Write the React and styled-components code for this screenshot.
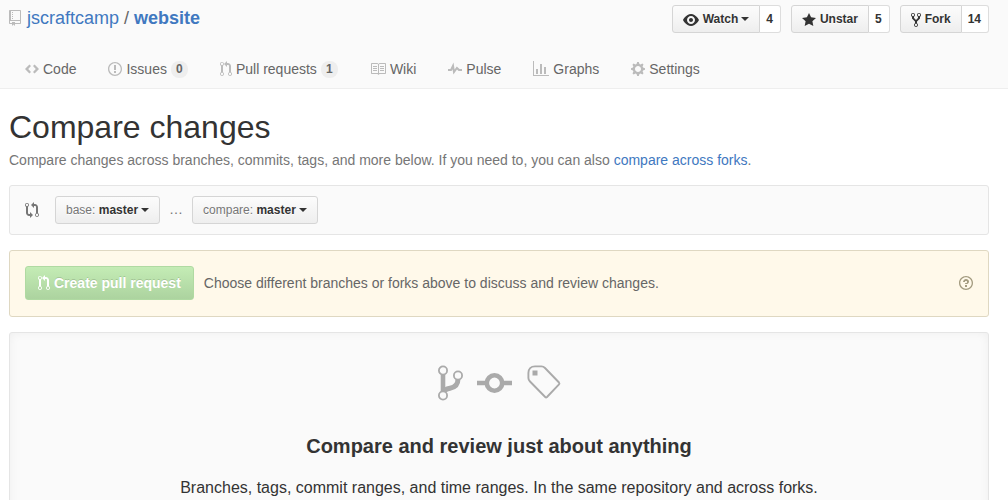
import React from "react";
import styled, { createGlobalStyle, css } from "styled-components";

const GlobalStyle = createGlobalStyle`
  * { box-sizing: border-box; }
  html { scrollbar-width: none; }
  body {
    margin: 0;
    background: #fff;
    color: #333;
    font: 14px/20px "Liberation Sans", Arial, sans-serif;
  }
  a { color: #4078c0; text-decoration: none; }
  button { font-family: inherit; cursor: pointer; }
`;

const ring = "M7 2.3c3.14 0 5.7 2.56 5.7 5.7s-2.56 5.7-5.7 5.7A5.71 5.71 0 0 1 1.3 8c0-3.14 2.56-5.7 5.7-5.7zM7 1C3.14 1 0 4.14 0 8s3.14 7 7 7 7-3.14 7-7-3.14-7-7-7z";

const ICONS = {
  repo: [12, "M4 9H3V8h1v1zm0-3H3v1h1V6zm0-2H3v1h1V4zm0-2H3v1h1V2zm8-1v12c0 .55-.45 1-1 1H6v2l-1.5-1.5L3 16v-2H1c-.55 0-1-.45-1-1V1c0-.55.45-1 1-1h10c.55 0 1 .45 1 1zm-1 10H1v2h2v-1h3v1h5v-2zm0-10H2v9h9V1z"],
  code: [14, "M4.4 3.5L0 8l4.4 4.5L6 10.900 3.200 8 6 5.100zM9.600 3.500L8 5.100 10.800 8 8 10.900l1.600 1.600L14 8z"],
  issue: [14, ring + "M8 4H6v5h2V4zm0 6H6v2h2v-2z"],
  question: [14, ring + "M6 10h2v2H6v-2zm4-3.5C10 8.64 8 9 8 9H6c0-.55.45-1 1-1h.5c.28 0 .5-.22.5-.5v-1c0-.28-.22-.5-.5-.5h-1c-.28 0-.5.22-.5.5V7H4c0-1.5 1.5-3 3-3s3 1 3 2.5z"],
  pull: [12, "M11 11.28V5c-.03-.78-.34-1.47-.94-2.06C9.46 2.35 8.78 2.03 8 2H7V0L4 3l3 3V4h1c.27.02.48.11.69.31.21.2.3.42.31.69v6.28A1.993 1.993 0 0 0 10 15a1.993 1.993 0 0 0 1-3.72zm-1 2.92c-.66 0-1.2-.55-1.2-1.2 0-.65.55-1.2 1.2-1.2.65 0 1.2.55 1.2 1.2 0 .65-.55 1.2-1.2 1.2zM4 3c0-1.11-.89-2-2-2a1.993 1.993 0 0 0-1 3.72v6.56A1.993 1.993 0 0 0 2 15a1.993 1.993 0 0 0 1-3.72V4.72c.59-.34 1-.98 1-1.72zm-.8 10c0 .66-.55 1.2-1.2 1.2-.65 0-1.2-.55-1.2-1.2 0-.65.55-1.2 1.2-1.2.65 0 1.2.55 1.2 1.2zM2 4.2C1.34 4.2.8 3.65.8 3c0-.65.55-1.2 1.2-1.2.65 0 1.2.55 1.2 1.2 0 .65-.55 1.2-1.2 1.2z"],
  book: [16, "M3 5h4v1H3V5zm0 3h4V7H3v1zm0 2h4V9H3v1zm11-5h-4v1h4V5zm0 2h-4v1h4V7zm0 2h-4v1h4V9zm2-6v9c0 .55-.45 1-1 1H9.5l-1 1-1-1H2c-.55 0-1-.45-1-1V3c0-.55.45-1 1-1h5.5l1 1 1-1H15c.55 0 1 .45 1 1zm-8 .5L7.5 3H2v9h6V3.5zm7-.5H9.5l-.5.5V12h6V3z"],
  pulse: [14, "M11.5 8L8.8 5.4 6.6 8.5 5.5 1.6 2.38 8H0v2h3.6l.9-1.8.9 5.4L9 8.5l1.6 1.5H14V8z"],
  graph: [16, "M16 14v1H0V0h1v14h15zM5 13H3V8h2v5zm4 0H7V3h2v10zm4 0h-2V6h2v7z"],
  gear: [14, "M14 8.77v-1.6l-1.94-.64-.45-1.09.88-1.84-1.13-1.13-1.81.91-1.09-.45-.69-1.92h-1.6l-.63 1.94-1.11.45-1.84-.88-1.13 1.13.91 1.81-.45 1.09L0 7.23v1.59l1.94.64.45 1.09-.88 1.84 1.13 1.13 1.81-.91 1.09.45.69 1.92h1.59l.63-1.94 1.11-.45 1.84.88 1.13-1.13-.92-1.81.47-1.09L14 8.75v.02zM7 11c-1.66 0-3-1.34-3-3s1.34-3 3-3 3 1.34 3 3-1.34 3-3 3z"],
  eye: [16, "M8.06 2C3 2 0 8 0 8s3 6 8.06 6C13 14 16 8 16 8s-3-6-7.94-6zM8 12c-2.2 0-4-1.78-4-4 0-2.2 1.8-4 4-4 2.22 0 4 1.8 4 4 0 2.22-1.78 4-4 4zm2-4c0 1.11-.89 2-2 2-1.11 0-2-.89-2-2 0-1.11.89-2 2-2 1.11 0 2 .89 2 2z"],
  star: [14, "M14 6l-4.9-.64L7 1 4.9 5.36 0 6l3.6 3.26L2.67 14 7 11.67 11.33 14l-.93-4.74z"],
  fork: [10, "M8 1a1.993 1.993 0 0 0-1 3.72V6L5 8 3 6V4.72A1.993 1.993 0 0 0 2 1a1.993 1.993 0 0 0-1 3.72V6.5l3 3v1.78A1.993 1.993 0 0 0 5 15a1.993 1.993 0 0 0 1-3.72V9.5l3-3V4.72A1.993 1.993 0 0 0 8 1zM2 4.2C1.34 4.2.8 3.65.8 3c0-.65.55-1.2 1.2-1.2.65 0 1.2.55 1.2 1.2 0 .65-.55 1.2-1.2 1.2zm3 10c-.66 0-1.2-.55-1.2-1.2 0-.65.55-1.2 1.2-1.2.65 0 1.2.55 1.2 1.2 0 .65-.55 1.2-1.2 1.2zm3-10c-.66 0-1.2-.55-1.2-1.2 0-.65.55-1.2 1.2-1.2.65 0 1.2.55 1.2 1.2 0 .65-.55 1.2-1.2 1.2z"],
  compare: [14, "M5 12H4c-.27-.02-.48-.11-.69-.31-.21-.2-.3-.42-.31-.69V4.72A1.993 1.993 0 0 0 2 1a1.993 1.993 0 0 0-1 3.72V11c.03.78.34 1.47.94 2.06.6.59 1.28.91 2.06.94h1v2l3-3-3-3v2zM2 1.8c.66 0 1.2.55 1.2 1.2 0 .65-.55 1.2-1.2 1.2C1.35 4.2.8 3.65.8 3c0-.65.55-1.2 1.2-1.2zm11 9.48V5c-.03-.78-.34-1.47-.94-2.06-.6-.59-1.28-.91-2.06-.94H9V0L6 3l3 3V4h1c.27.02.48.11.69.31.21.2.3.42.31.69v6.28A1.993 1.993 0 0 0 12 15a1.993 1.993 0 0 0 1-3.72zm-1 2.92c-.66 0-1.2-.55-1.2-1.2 0-.65.55-1.2 1.2-1.2.65 0 1.2.55 1.2 1.2 0 .65-.55 1.2-1.2 1.2z"],
};

const Svg = styled.svg`
  display: block;
  flex: none;
  fill: currentColor;
`;

function Icon({ name }) {
  const [width, d] = ICONS[name];
  return (
    <Svg width={width} height="16" viewBox={`0 0 ${width} 16`} aria-hidden="true">
      <path d={d} />
    </Svg>
  );
}

const container = css`
  max-width: 1008px;
  margin: 0 auto;
  padding: 0 19px 0 9px;
`;

const Header = styled.header`
  background: #fafafa;
  border-bottom: 1px solid #eee;
`;

const HeaderInner = styled.div`
  ${container}
  padding-top: 5px;
`;

const TitleRow = styled.div`
  display: flex;
  justify-content: space-between;
  align-items: flex-start;
`;

const RepoTitle = styled.h1`
  display: flex;
  align-items: center;
  gap: 6px;
  margin: 0;
  font-size: 18px;
  line-height: 26px;
  font-weight: 400;
  color: #666;
  svg { color: #bbb; }
`;

const Actions = styled.ul`
  display: flex;
  gap: 10px;
  margin: 0;
  padding: 0;
  list-style: none;
`;

const ActionItem = styled.li`
  display: flex;
`;

const Button = styled.button`
  display: flex;
  align-items: center;
  gap: 3px;
  height: 28px;
  padding: 0 10px;
  border: 1px solid #d5d5d5;
  border-radius: ${(p) => (p.$joined ? "3px 0 0 3px" : "3px")};
  background: linear-gradient(#fcfcfc, #eee);
  color: #333;
  font-size: 12px;
  font-weight: 700;
  line-height: 20px;
  text-shadow: 0 1px 0 rgba(255, 255, 255, 0.9);
  svg { margin: 2px 1px 0 0; }
`;

const Count = styled.a`
  height: 28px;
  padding: 0 7px 0 6px;
  border: 1px solid #ddd;
  border-left: 0;
  border-radius: 0 3px 3px 0;
  background: #fff;
  color: #333;
  font-size: 12px;
  font-weight: 700;
  line-height: 26px;
`;

const Caret = styled.span`
  border: 4px solid transparent;
  border-top-color: currentColor;
  border-bottom: 0;
`;

const Muted = styled.span`
  color: #767676;
  font-weight: 400;
`;

const Nav = styled.nav`
  display: flex;
  margin-top: 17px;
`;

const Tab = styled.a`
  display: flex;
  align-items: center;
  gap: 4px;
  height: 38px;
  padding: 0 16px;
  color: #666;
  svg { color: #bbb; }
`;

const Counter = styled.span`
  min-width: 17px;
  padding: 0 4px;
  border-radius: 8px;
  background: #eee;
  font-size: 12px;
  font-weight: 700;
  line-height: 17px;
  text-align: center;
`;

const Main = styled.main`
  ${container}
  padding-top: 19px;
`;

const PageTitle = styled.h2`
  margin: 0;
  font-size: 32px;
  line-height: 38px;
  font-weight: 400;
`;

const Lead = styled.p`
  margin: 4px 0 15px;
  color: #767676;
`;

const RangeBar = styled.section`
  display: flex;
  align-items: center;
  margin-bottom: 15px;
  padding: 10px 15px;
  border: 1px solid #e5e5e5;
  border-radius: 3px;
  background: #fafafa;
  color: #767676;
`;

const RangeIcon = styled.span`
  margin-right: 16px;
`;

const Dots = styled.span`
  width: 32px;
  padding-bottom: 2px;
  text-align: center;
`;

const Notice = styled.section`
  display: flex;
  align-items: center;
  gap: 10px;
  margin-bottom: 15px;
  padding: 15px 15px 16px;
  border: 1px solid #dfd8c2;
  border-radius: 3px;
  background: #fff9ea;
`;

const NoticeText = styled.p`
  flex: 1;
  margin: 0;
  color: #666;
`;

const PrimaryButton = styled.button`
  display: flex;
  align-items: center;
  gap: 4px;
  height: 34px;
  padding: 0 12px;
  border: 1px solid #b0daa2;
  border-radius: 3px;
  background: linear-gradient(#c4ecb5, #acd39f);
  color: #fff;
  font-size: 14px;
  font-weight: 700;
  line-height: 20px;
  text-shadow: 0 -1px 0 rgba(0, 0, 0, 0.15);
`;

const HelpLink = styled.a`
  color: #a39b7f;
`;

const Blank = styled.section`
  padding: 32px 30px;
  border: 1px solid #e5e5e5;
  border-radius: 3px;
  background: #fafafa;
  box-shadow: inset 0 0 10px rgba(0, 0, 0, 0.05);
  text-align: center;
`;

const BlankIcons = styled.div`
  display: flex;
  justify-content: center;
  gap: 14px;
  color: #aaa;
`;

const BlankTitle = styled.h3`
  margin: 32px 0 17px;
  font-size: 20px;
  line-height: 26px;
`;

const BlankText = styled.p`
  margin: 0;
  font-size: 16px;
  line-height: 24px;
`;

const LineSvg = styled.svg`
  display: block;
  overflow: visible;
  fill: none;
  stroke: currentColor;
`;

const actions = [
  { icon: "eye", label: "Watch", count: 4, menu: true },
  { icon: "star", label: "Unstar", count: 5 },
  { icon: "fork", label: "Fork", count: 14 },
];

const tabs = [
  { icon: "code", label: "Code" },
  { icon: "issue", label: "Issues", count: 0 },
  { icon: "pull", label: "Pull requests", count: 1 },
  { icon: "book", label: "Wiki" },
  { icon: "pulse", label: "Pulse" },
  { icon: "graph", label: "Graphs" },
  { icon: "gear", label: "Settings" },
];

function BranchButton({ label, branch }) {
  return (
    <Button type="button" aria-haspopup="menu">
      <span><Muted>{label}:</Muted> {branch}</span>
      <Caret />
    </Button>
  );
}

export default function App() {
  return (
    <>
      <GlobalStyle />
      <Header>
        <HeaderInner>
          <TitleRow>
            <RepoTitle>
              <Icon name="repo" />
              <span>
                <a href="#owner">jscraftcamp</a> / <a href="#repo"><strong>website</strong></a>
              </span>
            </RepoTitle>
            <Actions>
              {actions.map((a) => (
                <ActionItem key={a.label}>
                  <Button type="button" $joined aria-haspopup={a.menu ? "menu" : undefined}>
                    <Icon name={a.icon} />
                    {a.label}
                    {a.menu && <Caret />}
                  </Button>
                  <Count href={`#${a.icon}`}>{a.count}</Count>
                </ActionItem>
              ))}
            </Actions>
          </TitleRow>
          <Nav aria-label="Repository">
            {tabs.map((t) => (
              <Tab key={t.label} href={`#${t.icon}`}>
                <Icon name={t.icon} />
                {t.label}
                {t.count !== undefined && <Counter>{t.count}</Counter>}
              </Tab>
            ))}
          </Nav>
        </HeaderInner>
      </Header>
      <Main>
        <PageTitle>Compare changes</PageTitle>
        <Lead>
          Compare changes across branches, commits, tags, and more below. If you need to, you can also{" "}
          <a href="#forks">compare across forks</a>.
        </Lead>
        <RangeBar>
          <RangeIcon><Icon name="compare" /></RangeIcon>
          <BranchButton label="base" branch="master" />
          <Dots>…</Dots>
          <BranchButton label="compare" branch="master" />
        </RangeBar>
        <Notice>
          <PrimaryButton type="button">
            <Icon name="pull" />
            Create pull request
          </PrimaryButton>
          <NoticeText>Choose different branches or forks above to discuss and review changes.</NoticeText>
          <HelpLink href="#help" aria-label="Help"><Icon name="question" /></HelpLink>
        </Notice>
        <Blank>
          <BlankIcons>
            <LineSvg width="25" height="36" viewBox="0 0 25 36" aria-hidden="true">
              <path d="M5 9v18" strokeWidth="4.6" />
              <path d="M20 14c0 6.500-4 8.500-8 9.300-3.500.7-6 1.200-7 4.700" strokeWidth="5" />
              <g fill="#fafafa" strokeWidth="1.8">
                <circle cx="5" cy="5.5" r="4.1" />
                <circle cx="20" cy="10.5" r="4.1" />
                <circle cx="5" cy="30.5" r="4.1" />
              </g>
            </LineSvg>
            <LineSvg width="35" height="36" viewBox="0 0 35 36" aria-hidden="true">
              <path d="M0 18h8M27 18h8" strokeWidth="4.6" />
              <circle cx="17.5" cy="18" r="7.7" strokeWidth="4.6" />
            </LineSvg>
            <LineSvg width="34" height="36" viewBox="-1 0 34 36" aria-hidden="true">
              <path d="M8 1.4h6.5c1.5 0 2.5.6 3.5 1.6l14 14.5c.6.7.6 1.3 0 1.9L20 32c-.6.6-1.2.6-1.8 0L3 16.5C1.8 15.3 1.4 14.3 1.4 13V8c0-4 2.6-6.6 6.6-6.6z" strokeWidth="1.9" />
              <path d="M5.5 5.5h5v5h-5z" fill="currentColor" stroke="none" />
            </LineSvg>
          </BlankIcons>
          <BlankTitle>Compare and review just about anything</BlankTitle>
          <BlankText>
            Branches, tags, commit ranges, and time ranges. In the same repository and across forks.
          </BlankText>
        </Blank>
      </Main>
    </>
  );
}
